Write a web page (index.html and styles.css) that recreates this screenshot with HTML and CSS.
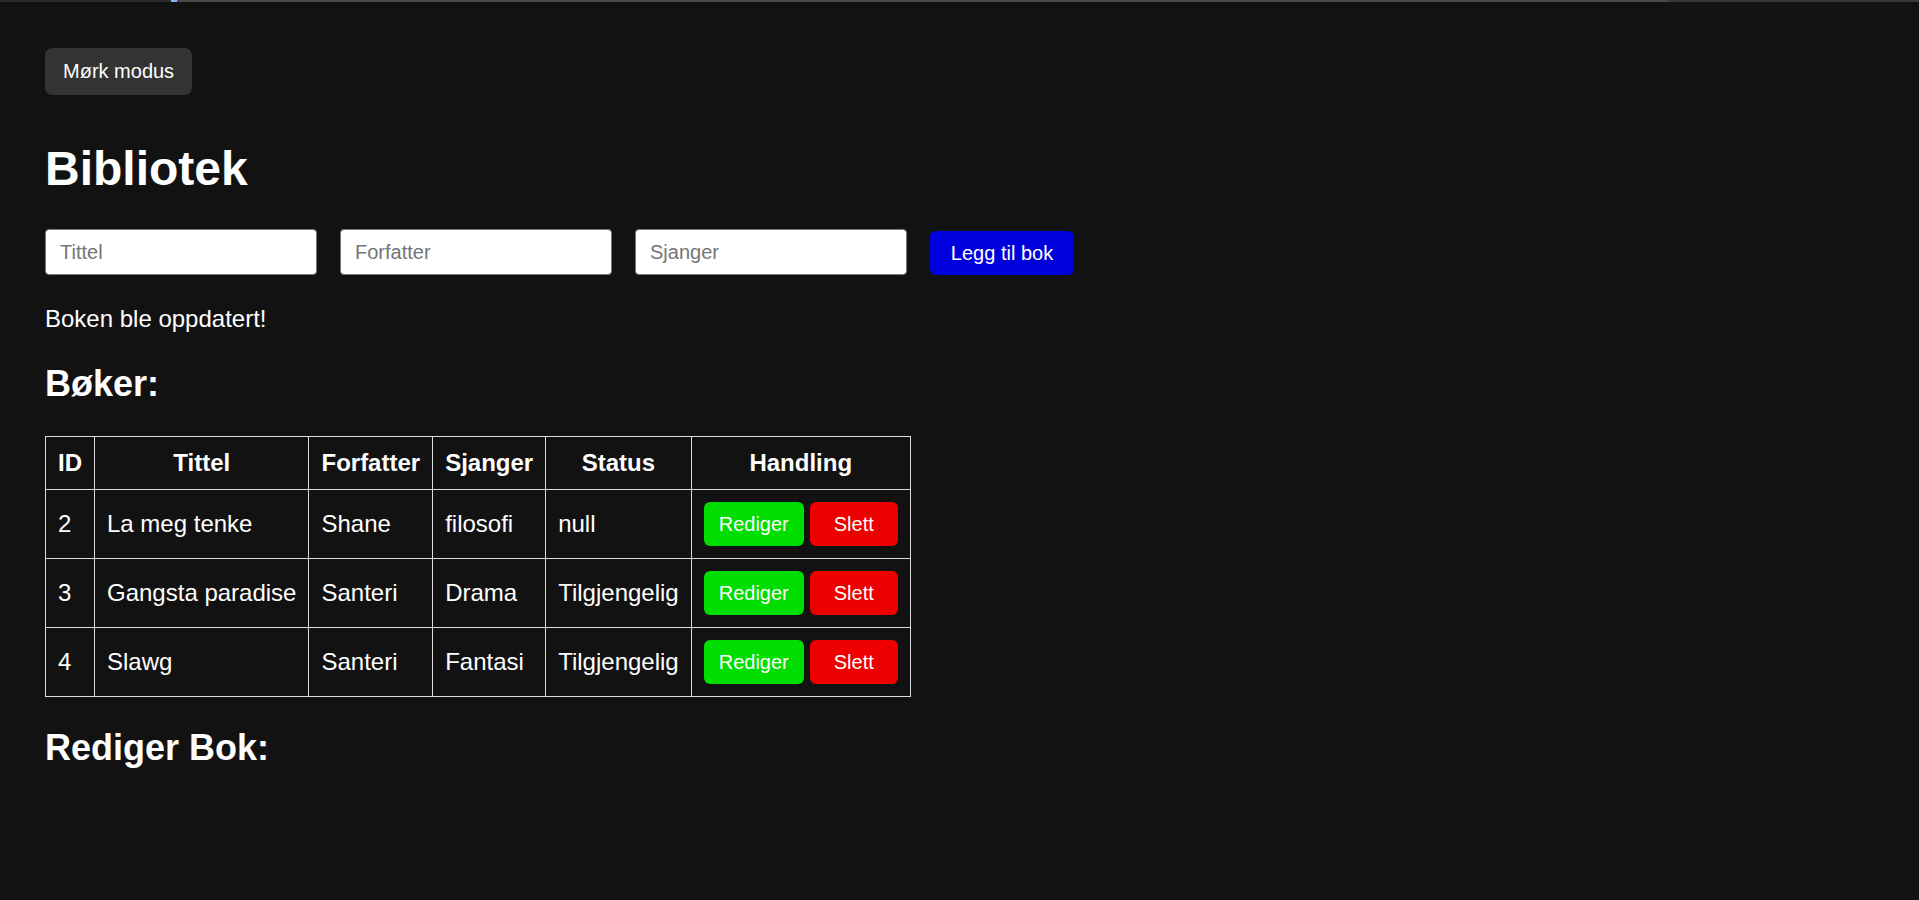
FILE: index.html
```html
<!DOCTYPE html>
<html lang="no">
<head>
<meta charset="utf-8">
<title>Bibliotek</title>
<link rel="stylesheet" href="styles.css">
</head>
<body>
<div class="topstrip">
  <span class="seg-a"></span><span class="seg-mark"></span><span class="seg-b"></span><span class="seg-c"></span>
</div>
<main class="page">
  <button class="mode-btn">Mørk modus</button>
  <h1 class="title">Bibliotek</h1>
  <div class="form-row">
    <input class="field" type="text" placeholder="Tittel">
    <input class="field" type="text" placeholder="Forfatter">
    <input class="field" type="text" placeholder="Sjanger">
    <button class="add-btn">Legg til bok</button>
  </div>
  <p class="message">Boken ble oppdatert!</p>
  <h2 class="section">Bøker:</h2>
  <table class="books">
    <thead>
      <tr><th>ID</th><th>Tittel</th><th>Forfatter</th><th>Sjanger</th><th>Status</th><th>Handling</th></tr>
    </thead>
    <tbody>
      <tr><td>2</td><td>La meg tenke</td><td>Shane</td><td>filosofi</td><td>null</td>
        <td><div class="actions"><button class="edit-btn">Rediger</button><button class="del-btn">Slett</button></div></td></tr>
      <tr><td>3</td><td>Gangsta paradise</td><td>Santeri</td><td>Drama</td><td>Tilgjengelig</td>
        <td><div class="actions"><button class="edit-btn">Rediger</button><button class="del-btn">Slett</button></div></td></tr>
      <tr><td>4</td><td>Slawg</td><td>Santeri</td><td>Fantasi</td><td>Tilgjengelig</td>
        <td><div class="actions"><button class="edit-btn">Rediger</button><button class="del-btn">Slett</button></div></td></tr>
    </tbody>
  </table>
  <h2 class="section section-edit">Rediger Bok:</h2>
</main>
</body>
</html>
```
FILE: styles.css
```css
html, body {
  margin: 0;
  padding: 0;
  background: #121212;
  color: #ffffff;
  font-family: "Liberation Sans", Arial, sans-serif;
  height: 900px;
  overflow: hidden;
}

.topstrip {
  display: flex;
  height: 2px;
}
.seg-a { width: 171px; background: #2c2c2c; }
.seg-mark { width: 6px; background: #8ab4f8; }
.seg-b { width: 1491px; background: #4a4a4a; }
.seg-c { flex: 1; background: #383838; }

.page {
  padding: 0 45px;
}

.mode-btn {
  display: block;
  margin: 46px 0 0;
  height: 47px;
  box-sizing: border-box;
  padding: 0 18px;
  background: #333333;
  color: #ffffff;
  border: none;
  border-radius: 7px;
  font-family: "Liberation Sans", Arial, sans-serif;
  font-size: 20px;
  line-height: 23px;
}

.title {
  margin: 46px 0 33px;
  font-size: 48px;
  font-weight: bold;
  line-height: normal;
}

.form-row {
  display: flex;
  align-items: flex-end;
  gap: 23px;
}

.field {
  width: 272px;
  height: 46px;
  box-sizing: border-box;
  margin: 0;
  padding: 0 14px;
  border: 1px solid #767676;
  border-radius: 4px;
  background: #ffffff;
  color: #000;
  font-family: "Liberation Sans", Arial, sans-serif;
  font-size: 20px;
}
.field::placeholder {
  color: #757575;
}

.add-btn {
  height: 44px;
  width: 144px;
  box-sizing: border-box;
  padding: 0;
  border: none;
  border-radius: 6px;
  background: #0000dd;
  color: #ffffff;
  font-family: "Liberation Sans", Arial, sans-serif;
  font-size: 20px;
}

.message {
  margin: 30px 0 0;
  font-size: 24px;
  line-height: normal;
}

.section {
  margin: 30px 0 0;
  font-size: 36px;
  font-weight: bold;
  line-height: normal;
}

.books {
  margin-top: 31px;
  border-collapse: collapse;
  font-size: 24px;
}
.books th,
.books td {
  border: 1px solid #dddddd;
  padding: 12px;
  line-height: normal;
  white-space: nowrap;
}
.books th {
  font-weight: bold;
  text-align: center;
}
.books td {
  text-align: left;
}

.actions {
  display: flex;
  gap: 6px;
}

.edit-btn,
.del-btn {
  height: 44px;
  box-sizing: border-box;
  border: none;
  border-radius: 6px;
  color: #ffffff;
  font-family: "Liberation Sans", Arial, sans-serif;
  font-size: 20px;
  line-height: 23px;
}
.edit-btn {
  padding: 0 15px;
  background: #00dd00;
}
.del-btn {
  padding: 0 24px;
  background: #ee0000;
}

.section-edit {
  margin-top: 30px;
}
```
